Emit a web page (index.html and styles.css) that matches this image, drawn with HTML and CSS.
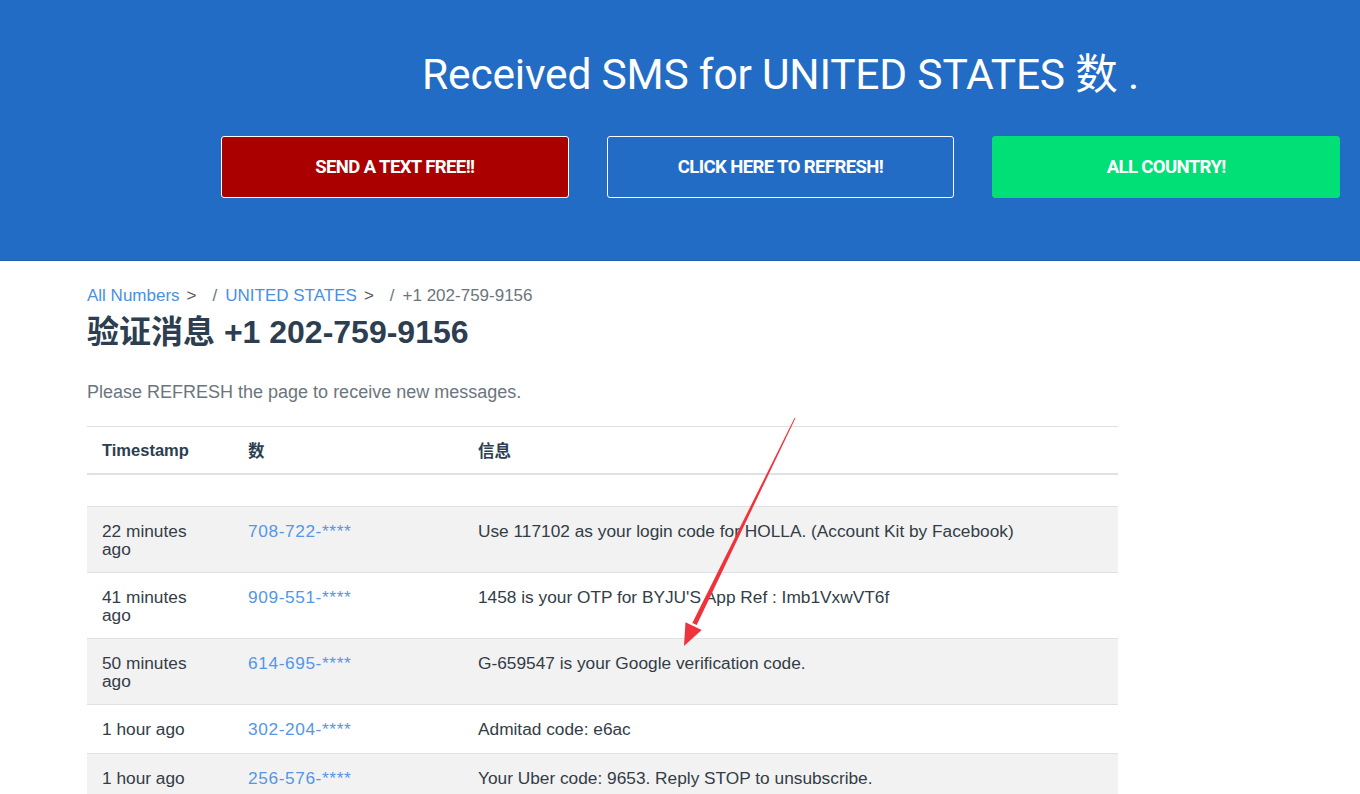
FILE: index.html
```html
<!DOCTYPE html>
<html lang="zh">
<head>
<meta charset="utf-8">
<title>Received SMS for UNITED STATES</title>
<link rel="stylesheet" href="styles.css">
</head>
<body>
<header class="hero">
  <h1 class="hero-title">Received SMS for UNITED STATES 数 .</h1>
  <div class="hero-buttons">
    <a class="btn btn-red" href="#">SEND A TEXT FREE!!</a>
    <a class="btn btn-outline" href="#">CLICK HERE TO REFRESH!</a>
    <a class="btn btn-green" href="#">ALL COUNTRY!</a>
  </div>
</header>
<main class="content">
  <nav class="crumbs">
    <a href="#">All Numbers</a><span class="sep">&gt;</span><span class="slash">/</span><a href="#">UNITED STATES</a><span class="sep">&gt;</span><span class="slash">/</span><span class="current">+1 202-759-9156</span>
  </nav>
  <h2 class="page-title">验证消息 +1 202-759-9156</h2>
  <p class="note">Please REFRESH the page to receive new messages.</p>
  <table class="sms">
    <thead>
      <tr><th class="c1">Timestamp</th><th class="c2">数</th><th>信息</th></tr>
    </thead>
    <tbody>
      <tr class="empty"><td colspan="3"></td></tr>
      <tr class="alt"><td>22 minutes<br>ago</td><td><a href="#">708-722-****</a></td><td>Use 117102 as your login code for HOLLA. (Account Kit by Facebook)</td></tr>
      <tr><td>41 minutes<br>ago</td><td><a href="#">909-551-****</a></td><td>1458 is your OTP for BYJU'S App Ref : Imb1VxwVT6f</td></tr>
      <tr class="alt"><td>50 minutes<br>ago</td><td><a href="#">614-695-****</a></td><td>G-659547 is your Google verification code.</td></tr>
      <tr class="short"><td>1 hour ago</td><td><a href="#">302-204-****</a></td><td>Admitad code: e6ac</td></tr>
      <tr class="alt short"><td>1 hour ago</td><td><a href="#">256-576-****</a></td><td>Your Uber code: 9653. Reply STOP to unsubscribe.</td></tr>
    </tbody>
  </table>
</main>
<svg class="arrow" width="1360" height="794" viewBox="0 0 1360 794" aria-hidden="true">
  <polygon points="794.6,417.8 795.4,418.2 696.7,625.1 692.3,622.9" fill="#f0333a"/>
  <polygon points="684,646 685.5,622.3 701.7,630.1" fill="#f0333a"/>
</svg>
</body>
</html>
```
FILE: styles.css
```css
html, body {
  margin: 0;
  padding: 0;
  background: #ffffff;
  overflow: hidden;
}
body {
  font-family: "Liberation Sans", Arial, "Noto Sans CJK SC", sans-serif;
  color: #2c3e50;
  position: relative;
  height: 794px;
}
.hero {
  background: #226cc5;
  height: 261px;
  border-bottom: 1px solid #1f5fae;
  box-sizing: border-box;
  padding: 51px 20px 0 221px;
}
.hero-title {
  margin: 0;
  text-align: center;
  width: 1119px;
  font-family: Roboto, "Liberation Sans", "Noto Sans CJK SC", sans-serif;
  font-weight: 400;
  font-size: 42.5px;
  line-height: 48px;
  color: #ffffff;
  letter-spacing: -0.2px;
}
.hero-buttons {
  display: flex;
  gap: 38px;
  margin-top: 37px;
  width: 1119px;
}
.btn {
  flex: 1 1 0;
  height: 62px;
  box-sizing: border-box;
  display: flex;
  align-items: center;
  justify-content: center;
  border-radius: 3px;
  color: #ffffff;
  text-decoration: none;
  font-family: Roboto, "Liberation Sans", sans-serif;
  font-weight: 700;
  font-size: 18.5px;
  letter-spacing: -0.6px;
}
.btn-red {
  background: #aa0000;
  border: 1px solid #ffffff;
}
.btn-outline {
  background: transparent;
  border: 1px solid #ffffff;
}
.btn-green {
  background: #00e077;
  border: 1px solid #00e077;
}
.content {
  padding: 24px 0 0 87px;
  width: 1031px;
}
.crumbs {
  font-size: 17px;
  line-height: 22px;
  color: #6c757d;
}
.crumbs a {
  color: #4a90e2;
  text-decoration: none;
}
.crumbs .sep {
  color: #555;
  margin: 0 0 0 7px;
}
.crumbs .slash {
  margin: 0 8px 0 16px;
  color: #6c757d;
}
.page-title {
  margin: 5px 0 0;
  font-family: "Liberation Sans", Arial, "Noto Sans CJK SC", sans-serif;
  font-weight: 700;
  font-size: 32px;
  line-height: 40px;
  color: #2c3e50;
}
.note {
  margin: 28px 0 0;
  font-size: 18px;
  line-height: 24px;
  color: #6c757d;
}
.sms {
  margin-top: 22px;
  width: 1031px;
  border-collapse: collapse;
  font-size: 17.3px;
  color: #333d47;
}
.sms th {
  text-align: left;
  font-weight: 700;
  font-size: 16.5px;
  color: #2c3e50;
  padding: 0 15px;
  height: 46px;
  border-top: 1px solid #dee2e6;
  border-bottom: 2px solid #dee2e6;
  font-family: "Liberation Sans", Arial, "Noto Sans CJK SC", sans-serif;
}
.sms .c1 { width: 116px; }
.sms .c2 { width: 200px; }
.sms td {
  padding: 15px 15px 0;
  vertical-align: top;
  height: 50px;
  line-height: 18px;
  border-top: 1px solid #dee2e6;
}
.sms tr.empty td {
  height: 31px;
  padding: 0;
  border-top: none;
}
.sms tr.short td {
  height: 33px;
}
.sms tr.alt td {
  background: #f2f2f2;
}
.sms td a {
  color: #5596e6;
  text-decoration: none;
  letter-spacing: 0.6px;
}
.arrow {
  position: absolute;
  left: 0;
  top: 0;
  pointer-events: none;
}
```
